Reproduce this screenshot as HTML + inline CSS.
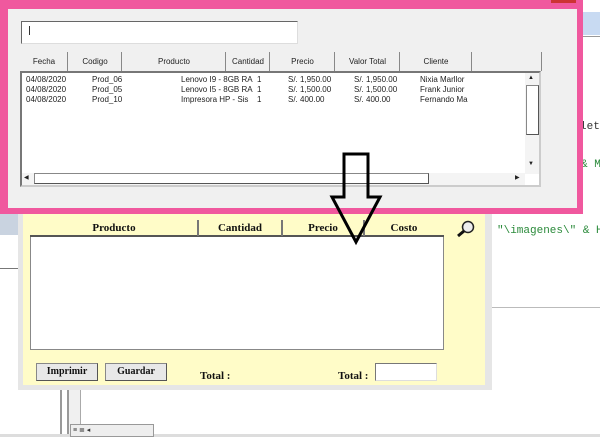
<!DOCTYPE html>
<html><head><meta charset="utf-8"><style>
*{margin:0;padding:0;box-sizing:border-box}
body{width:600px;height:437px;position:relative;overflow:hidden;background:#fff;font-family:"Liberation Sans",sans-serif}
.a{position:absolute}
.t{font-size:8px;color:#222;white-space:nowrap}
.s{font-family:"Liberation Serif",serif;font-weight:bold;font-size:11px;color:#111;white-space:nowrap}
.code{font-family:"Liberation Mono",monospace;font-size:11px;color:#2a8a3a;white-space:nowrap}
</style></head><body>
<!-- right background -->
<div class="a" style="left:583px;top:12px;width:17px;height:23px;background:#c8daf2"></div>
<div class="a" style="left:583px;top:36px;width:17px;height:1px;background:#999"></div>
<div class="a code" style="left:580px;top:121px;color:#333">leta</div>
<div class="a code" style="left:581px;top:159px">&amp; Mc</div>
<div class="a code" style="left:497px;top:225px">"\imagenes\" &amp; Ho</div>
<div class="a" style="left:485px;top:307px;width:115px;height:1px;background:#bbb"></div>
<div class="a" style="left:0;top:210px;width:18px;height:25px;background:#c9d3e0"></div>
<div class="a" style="left:0;top:268px;width:18px;height:1px;background:#777"></div>
<!-- bottom area -->
<div class="a" style="left:60px;top:388px;width:2px;height:49px;background:#999"></div>
<div class="a" style="left:67px;top:388px;width:14px;height:49px;border-left:2px solid #999;border-right:1px solid #aaa;background:#f0f0f0"></div>
<div class="a" style="left:0;top:434px;width:600px;height:3px;background:#ddd"></div>
<div class="a" style="left:70px;top:424px;width:84px;height:13px;background:#eee;border:1px solid #999;font-size:7px;line-height:11px;color:#333">&nbsp;≡ ≣ ◂</div>
<!-- lower dialog -->
<div class="a" style="left:18px;top:200px;width:474px;height:190px;background:#e6e6e6"></div>
<div class="a" style="left:23px;top:205px;width:462px;height:180px;background:#fffcc8"></div>
<div class="a" style="left:30px;top:219px;width:414px;height:131px;background:#fff;border:1px solid #888"></div>
<div class="a" style="left:30px;top:219px;width:414px;height:18px;background:#fffcc8;border-bottom:2px solid #555"></div>
<div class="a s" style="left:30px;top:222px;width:168px;text-align:center">Producto</div>
<div class="a" style="left:197px;top:220px;width:2px;height:16px;background:#777"></div>
<div class="a s" style="left:199px;top:222px;width:82px;text-align:center">Cantidad</div>
<div class="a" style="left:281px;top:220px;width:2px;height:16px;background:#777"></div>
<div class="a s" style="left:283px;top:222px;width:80px;text-align:center">Precio</div>
<div class="a" style="left:363px;top:220px;width:2px;height:16px;background:#777"></div>
<div class="a s" style="left:365px;top:222px;width:78px;text-align:center">Costo</div>
<svg class="a" style="left:456px;top:220px" width="20" height="18"><circle cx="12" cy="7" r="5.5" fill="#eee" stroke="#222" stroke-width="1.5"/><path d="M8 11 L2 16" stroke="#111" stroke-width="3"/></svg>
<div class="a s" style="left:36px;top:363px;width:62px;height:18px;background:#e8e8e8;border:1px solid #888;border-right-color:#555;border-bottom-color:#555;font-size:10px;text-align:center;line-height:16px">Imprimir</div>
<div class="a s" style="left:105px;top:363px;width:62px;height:18px;background:#e8e8e8;border:1px solid #888;border-right-color:#555;border-bottom-color:#555;font-size:10px;text-align:center;line-height:16px">Guardar</div>
<div class="a s" style="left:200px;top:370px">Total :</div>
<div class="a s" style="left:338px;top:370px">Total :</div>
<div class="a" style="left:375px;top:363px;width:62px;height:18px;background:#fff;border:1px solid #777;border-right-color:#ddd;border-bottom-color:#ddd"></div>
<!-- top dialog -->
<div class="a" style="left:0;top:0;width:583px;height:214px;background:#f0589e"></div>
<div class="a" style="left:551px;top:0;width:25px;height:3px;background:#c33"></div>
<div class="a" style="left:8px;top:9px;width:569px;height:199px;background:#f0f0f0"></div>
<div class="a" style="left:21px;top:21px;width:277px;height:23px;background:#fff;border:1px solid #666;border-right-color:#ddd;border-bottom-color:#ddd"></div>
<div class="a" style="left:29px;top:26px;width:1px;height:9px;background:#333"></div>
<!-- listview -->
<div class="a" style="left:20px;top:52px;width:522px;height:19px;background:#f0f0f0"></div>
<div class="a" style="left:20px;top:71px;width:521px;height:116px;background:#fff;border:2px solid #777;border-right-color:#ccc;border-bottom-color:#ccc"></div>
<div class="a t" style="left:20px;top:57px;width:48px;text-align:center">Fecha</div>
<div class="a t" style="left:68px;top:57px;width:54px;text-align:center">Codigo</div>
<div class="a t" style="left:122px;top:57px;width:104px;text-align:center">Producto</div>
<div class="a t" style="left:226px;top:57px;width:44px;text-align:center">Cantidad</div>
<div class="a t" style="left:270px;top:57px;width:65px;text-align:center">Precio</div>
<div class="a t" style="left:335px;top:57px;width:65px;text-align:center">Valor Total</div>
<div class="a t" style="left:400px;top:57px;width:72px;text-align:center">Cliente</div>
<div class="a" style="left:67px;top:52px;width:1px;height:19px;background:#888"></div>
<div class="a" style="left:121px;top:52px;width:1px;height:19px;background:#888"></div>
<div class="a" style="left:225px;top:52px;width:1px;height:19px;background:#888"></div>
<div class="a" style="left:269px;top:52px;width:1px;height:19px;background:#888"></div>
<div class="a" style="left:334px;top:52px;width:1px;height:19px;background:#888"></div>
<div class="a" style="left:399px;top:52px;width:1px;height:19px;background:#888"></div>
<div class="a" style="left:471px;top:52px;width:1px;height:19px;background:#888"></div>
<div class="a" style="left:541px;top:52px;width:1px;height:19px;background:#888"></div>
<div class="a t" style="left:26px;top:75px;line-height:10px">04/08/2020<br>04/08/2020<br>04/08/2020</div>
<div class="a t" style="left:92px;top:75px;line-height:10px">Prod_06<br>Prod_05<br>Prod_10</div>
<div class="a t" style="left:181px;top:75px;line-height:10px">Lenovo I9 - 8GB RA<br>Lenovo I5 - 8GB RA<br>Impresora HP - Sis</div>
<div class="a t" style="left:257px;top:75px;line-height:10px">1<br>1<br>1</div>
<div class="a t" style="left:288px;top:75px;line-height:10px">S/. 1,950.00<br>S/. 1,500.00<br>S/. 400.00</div>
<div class="a t" style="left:354px;top:75px;line-height:10px">S/. 1,950.00<br>S/. 1,500.00<br>S/. 400.00</div>
<div class="a t" style="left:420px;top:75px;line-height:10px;width:48px;overflow:hidden">Nixia Marllor<br>Frank Junior<br>Fernando Ma</div>
<div class="a" style="left:525px;top:73px;width:14px;height:101px;background:#f4f4f4"></div>
<div class="a t" style="left:528px;top:75px;font-size:6px">▲</div>
<div class="a" style="left:526px;top:85px;width:13px;height:50px;background:#fff;border:1px solid #888;border-right-color:#555;border-bottom-color:#555"></div>
<div class="a t" style="left:528px;top:161px;font-size:6px">▼</div>
<div class="a" style="left:22px;top:173px;width:503px;height:12px;background:#f4f4f4"></div>
<div class="a t" style="left:24px;top:174px;font-size:6px">◀</div>
<div class="a" style="left:34px;top:173px;width:395px;height:11px;background:#fff;border:1px solid #888;border-right-color:#555;border-bottom-color:#555"></div>
<div class="a t" style="left:515px;top:174px;font-size:6px">▶</div>
<!-- arrow -->
<svg class="a" style="left:0;top:0" width="600" height="437"><path d="M344 154 L368 154 L368 197 L380 197 L356 242 L332 197 L344 197 Z" fill="none" stroke="#000" stroke-width="3" stroke-linejoin="miter"/></svg>
</body></html>
